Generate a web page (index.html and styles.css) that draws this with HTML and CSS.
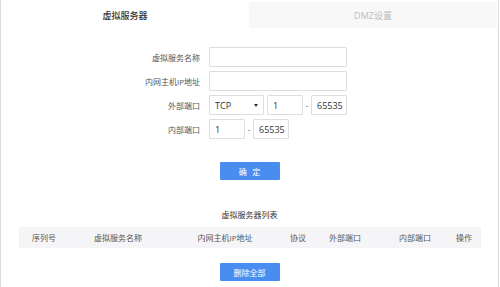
FILE: index.html
```html
<!DOCTYPE html>
<html lang="zh">
<head>
<meta charset="utf-8">
<link rel="stylesheet" href="styles.css">
</head>
<body>
<div class="page">
  <div class="tabs">
    <div class="tab active">虚拟服务器</div>
    <div class="tab">DMZ设置</div>
  </div>
  <form class="form">
    <div class="row">
      <label class="label">虚拟服务名称</label>
      <input class="input wide" type="text" value="">
    </div>
    <div class="row">
      <label class="label">内网主机IP地址</label>
      <input class="input wide" type="text" value="">
    </div>
    <div class="row">
      <label class="label">外部端口</label>
      <div class="select"><span>TCP</span><i class="caret"></i></div>
      <input class="input port" type="text" value="1">
      <span class="dash">-</span>
      <input class="input port" type="text" value="65535">
    </div>
    <div class="row">
      <label class="label">内部端口</label>
      <input class="input port" type="text" value="1">
      <span class="dash">-</span>
      <input class="input port" type="text" value="65535">
    </div>
    <div class="actions">
      <button type="button" class="btn">确&nbsp;&nbsp;&nbsp;定</button>
    </div>
  </form>
  <div class="list-title">虚拟服务器列表</div>
  <div class="thead">
    <span>序列号</span>
    <span>虚拟服务名称</span>
    <span>内网主机IP地址</span>
    <span>协议</span>
    <span>外部端口</span>
    <span>内部端口</span>
    <span>操作</span>
  </div>
  <div class="actions bottom">
    <button type="button" class="btn">删除全部</button>
  </div>
</div>
</body>
</html>
```
FILE: styles.css
```css
* { box-sizing: border-box; }
html, body { margin: 0; padding: 0; background: #fff; }
body {
  font-family: "Open Sans", "Noto Sans CJK SC", sans-serif;
  color: #555;
}
.page {
  width: 499px;
  height: 287px;
  border-left: 1px solid #dcdcdc;
  border-right: 1px solid #dcdcdc;
  padding-top: 2px;
}
.tabs {
  display: flex;
  height: 26px;
  padding-right: 1px;
}
.tab {
  flex: 1;
  display: flex;
  align-items: center;
  justify-content: center;
  font-size: 9px;
  background: #f8f8f8;
  color: #bbb;
}
.tab.active {
  background: #fff;
  color: #333;
  font-weight: 500;
}
.form {
  margin: 19px 0 0;
  display: flex;
  flex-direction: column;
  gap: 4px;
}
.row {
  display: flex;
  align-items: center;
  height: 20px;
}
.label {
  width: 199px;
  text-align: right;
  font-size: 8px;
  color: #555;
  margin-right: 9px;
}
.input {
  height: 20px;
  border: 1px solid #dedede;
  border-radius: 1px;
  padding: 0 0 0 5px;
  font-family: "Open Sans", sans-serif;
  font-size: 9px;
  color: #333;
  outline: none;
  background: #fff;
}
.input.wide { width: 138px; }
.input.port { width: 36px; }
.select {
  width: 55px;
  height: 20px;
  border: 1px solid #dedede;
  border-radius: 1px;
  display: flex;
  align-items: center;
  justify-content: space-between;
  padding: 0 5px;
  font-size: 9px;
  color: #333;
  margin-right: 3px;
}
.caret {
  width: 0;
  height: 0;
  border-left: 2px solid transparent;
  border-right: 2px solid transparent;
  border-top: 3px solid #333;
}
.dash {
  width: 8px;
  text-align: center;
  font-size: 9px;
  color: #777;
}
.actions {
  display: flex;
  justify-content: center;
  margin-top: 19px;
}
.btn {
  width: 60px;
  height: 18px;
  border: none;
  border-radius: 1px;
  background: #4a8df0;
  color: #fff;
  font-family: "Noto Sans CJK SC", sans-serif;
  font-size: 8px;
  padding: 0;
}
.list-title {
  margin-top: 29px;
  text-align: center;
  font-size: 8px;
  line-height: 12px;
  color: #333;
}
.thead {
  margin: 6px 17px 0 18px;
  height: 21px;
  background: #f5f5f8;
  display: grid;
  grid-template-columns: 50px 98px 116px 30px 64px 76px 22px 1fr;
  align-items: center;
  font-size: 8px;
  color: #555;
}
.thead span { text-align: center; white-space: nowrap; }
.actions.bottom { margin-top: 15px; }
```
